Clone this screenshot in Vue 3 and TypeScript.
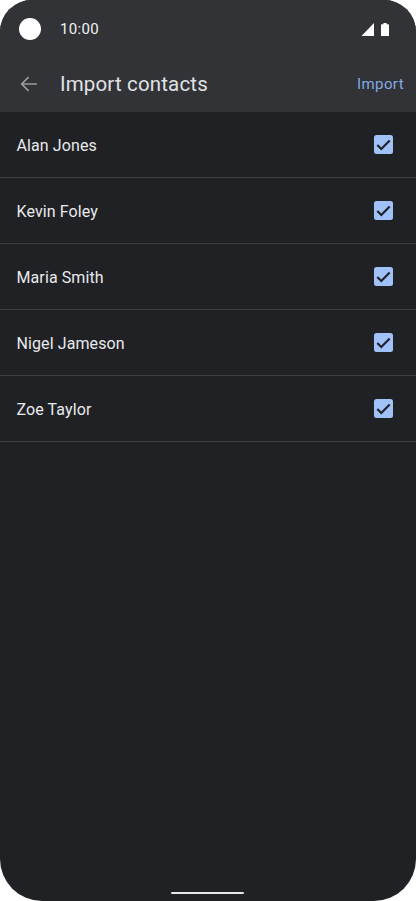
<script setup lang="ts">
const contacts: string[] = ['Alan Jones', 'Kevin Foley', 'Maria Smith', 'Nigel Jameson', 'Zoe Taylor']
</script>

<template>
  <div class="screen">
    <header class="top">
      <div class="status">
        <span class="camera"></span>
        <span class="time">10:00</span>
        <span class="status-icons">
          <svg width="13" height="13" viewBox="0 0 13 13"><path d="M13 0V13H0.500z" fill="#fff" /></svg>
          <svg width="8" height="13" viewBox="0 0 8 13"><path d="M2.4 0h3.200v1.300H7.400a.6.6 0 0 1 .6.6v10.500a.6.6 0 0 1-.6.6H.6a.6.6 0 0 1-.6-.6V1.900a.6.6 0 0 1 .6-.6h1.800z" fill="#fff" /></svg>
        </span>
      </div>
      <div class="bar">
        <svg class="back" width="18" height="16" viewBox="0 0 18 16"><path d="M17 8H2M8.500 1.200 1.700 8l6.800 6.800" fill="none" stroke="#9a9b9e" stroke-width="1.700" /></svg>
        <span class="title">Import contacts</span>
        <span class="action">Import</span>
      </div>
    </header>
    <ul class="list">
      <li v-for="name in contacts" :key="name" class="row">
        <span class="name">{{ name }}</span>
        <span class="check">
          <svg width="15" height="12" viewBox="0 0 15 12"><path d="M1.300 6 5.300 10 13.700 1.500" fill="none" stroke="#20232e" stroke-width="2.200" /></svg>
        </span>
      </li>
    </ul>
    <div class="home"></div>
  </div>
</template>

<style>
html, body { background: #fff; margin: 0; }
</style>

<style scoped>
.screen {
  position: relative;
  width: 416px;
  height: 901px;
  border-radius: 32px 32px 42px 42px;
  overflow: hidden;
  background: #202124;
  font-family: Roboto, "Liberation Sans", sans-serif;
}
.top { height: 112px; background: #323337; box-sizing: border-box; }
.status {
  height: 58px;
  display: flex;
  align-items: center;
  padding: 0 27px 0 19px;
}
.camera { width: 22px; height: 22px; border-radius: 50%; background: #fff; }
.time { margin-left: 19px; font-size: 15px; color: #f1f1f1; letter-spacing: 0.35px; }
.status-icons { margin-left: auto; display: flex; align-items: center; gap: 7px; }
.bar {
  height: 54px;
  display: flex;
  align-items: center;
  padding: 0 12px 2px 20px;
  box-sizing: border-box;
}
.title { margin-left: 22px; font-size: 20.500px; color: #e0e2e5; letter-spacing: 0.15px; }
.action { margin-left: auto; font-size: 15px; color: #85a9e3; letter-spacing: 0.4px; }
.list { list-style: none; margin: 0; padding: 0; }
.row {
  height: 66px;
  box-sizing: border-box;
  display: flex;
  align-items: center;
  justify-content: space-between;
  padding: 0 23.500px 0 16.500px;
  border-bottom: 1px solid #3c3d40;
}
.name { font-size: 16px; color: #e8eaed; letter-spacing: 0.1px; line-height: 20px; padding-top: 2px; }
.check {
  width: 18.500px;
  height: 18.500px;
  border-radius: 2.500px;
  background: #a1c1f9;
  display: flex;
  align-items: center;
  justify-content: center;
}
.home {
  position: absolute;
  left: 171px;
  bottom: 7px;
  width: 73px;
  height: 2px;
  border-radius: 1px;
  background: #e8e8e8;
}
</style>
